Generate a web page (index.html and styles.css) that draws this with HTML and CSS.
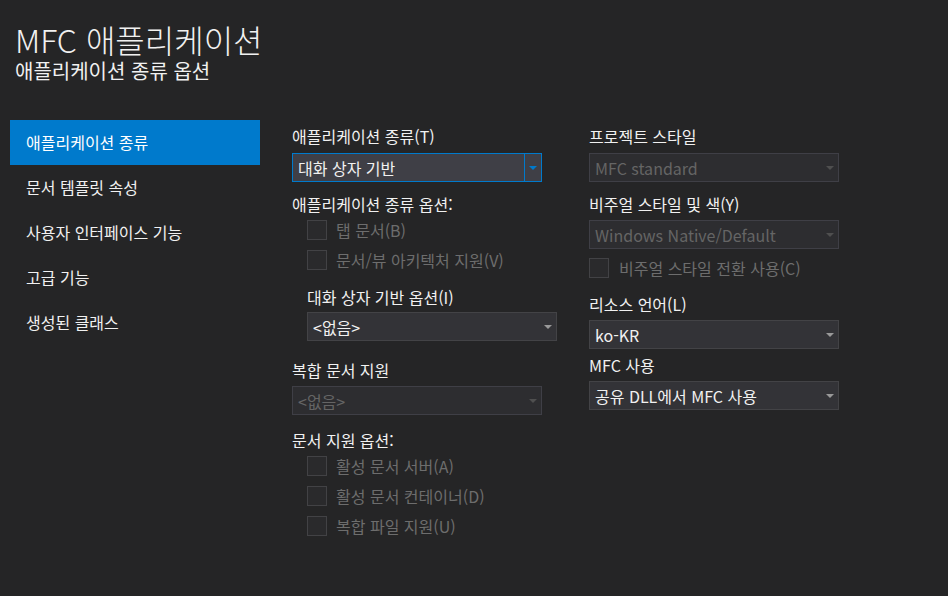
FILE: index.html
```html
<!DOCTYPE html>
<html lang="ko">
<head>
  <meta charset="UTF-8" />
  <meta name="viewport" content="width=device-width, initial-scale=1.0"/>
  <title>MFC 애플리케이션</title>
  <link rel="stylesheet" href="styles.css">
</head>
<body>

  <div class="header">
    <h1>MFC 애플리케이션</h1>
    <h2>애플리케이션 종류 옵션</h2>
  </div>

  <div class="main">
    <ul class="nav">
      <li class="active">애플리케이션 종류</li>
      <li>문서 템플릿 속성</li>
      <li>사용자 인터페이스 기능</li>
      <li>고급 기능</li>
      <li>생성된 클래스</li>
    </ul>

    <div class="col">
      <div class="label">애플리케이션 종류(T)</div>
      <div class="combo focus mt7">
        <span class="value">대화 상자 기반</span>
        <span class="btn"><span class="arrow"></span></span>
      </div>

      <div class="label mt12">애플리케이션 종류 옵션:</div>
      <div class="checks mt1">
        <div class="check"><span class="box"></span>탭 문서(B)</div>
        <div class="check"><span class="box"></span>문서/뷰 아키텍처 지원(V)</div>
      </div>

      <div class="indent">
        <div class="label mt12">대화 상자 기반 옵션(I)</div>
        <div class="combo mt5">
          <span class="value">&lt;없음&gt;</span>
          <span class="btn"><span class="arrow"></span></span>
        </div>
      </div>

      <div class="label mt19">복합 문서 지원</div>
      <div class="combo disabled mt6">
        <span class="value">&lt;없음&gt;</span>
        <span class="btn"><span class="arrow"></span></span>
      </div>

      <div class="label mt15">문서 지원 옵션:</div>
      <div class="checks mt1">
        <div class="check"><span class="box"></span>활성 문서 서버(A)</div>
        <div class="check"><span class="box"></span>활성 문서 컨테이너(D)</div>
        <div class="check"><span class="box"></span>복합 파일 지원(U)</div>
      </div>
    </div>

    <div class="col right">
      <div class="label">프로젝트 스타일</div>
      <div class="combo disabled mt7">
        <span class="value">MFC standard</span>
        <span class="btn"><span class="arrow"></span></span>
      </div>

      <div class="label mt12">비주얼 스타일 및 색(Y)</div>
      <div class="combo disabled mt6">
        <span class="value">Windows Native/Default</span>
        <span class="btn"><span class="arrow"></span></span>
      </div>
      <div class="check wide mt4"><span class="box"></span>비주얼 스타일 전환 사용(C)</div>

      <div class="label mt11">리소스 언어(L)</div>
      <div class="combo mt6">
        <span class="value">ko-KR</span>
        <span class="btn"><span class="arrow"></span></span>
      </div>

      <div class="label mt6">MFC 사용</div>
      <div class="combo mt6">
        <span class="value">공유 DLL에서 MFC 사용</span>
        <span class="btn"><span class="arrow"></span></span>
      </div>
    </div>
  </div>

</body>
</html>
```

FILE: styles.css
```css
body {
  margin: 0;
  background: #252526;
  color: #f1f1f1;
  font-family: "Noto Sans CJK KR", sans-serif;
  font-size: 16px;
}

.header {
  padding: 20px 0 0 15px;
}

h1 {
  margin: 0;
  font-size: 32px;
  font-weight: 300;
  line-height: 38px;
}

h2 {
  margin: 1px 0 0;
  font-size: 20px;
  font-weight: 400;
  line-height: 24px;
}

.main {
  display: flex;
  margin-top: 37px;
}

.nav {
  list-style: none;
  margin: 0 0 0 10px;
  padding: 0;
  width: 250px;
}

.nav li {
  height: 45px;
  line-height: 45px;
  padding-left: 16px;
}

.nav li.active {
  background: #007acc;
  color: #fff;
}

.col {
  display: flex;
  flex-direction: column;
  width: 250px;
  margin-left: 32px;
  padding-top: 6px;
}

.col.right {
  margin-left: 47px;
}

.label {
  line-height: 20px;
  height: 20px;
  white-space: nowrap;
}

.indent {
  padding-left: 15px;
  display: flex;
  flex-direction: column;
}

.indent .combo {
  width: 250px;
}

.combo {
  display: flex;
  align-items: center;
  height: 29px;
  box-sizing: border-box;
  background: #333337;
  border: 1px solid #434346;
  color: #f1f1f1;
}

.combo .value {
  flex: 1;
  padding-left: 5px;
  white-space: nowrap;
  overflow: hidden;
}

.combo .btn {
  width: 16px;
  align-self: stretch;
  display: flex;
  align-items: center;
  justify-content: center;
}

.arrow {
  width: 0;
  height: 0;
  border-left: 4px solid transparent;
  border-right: 4px solid transparent;
  border-top: 4px solid #999999;
}

.combo.focus {
  background: #3f3f46;
  border-color: #007acc;
}

.combo.focus .btn {
  border-left: 1px solid #007acc;
}

.combo.focus .arrow {
  border-top-color: #007acc;
}

.combo.disabled {
  background: #2d2d30;
  border-color: #3f3f46;
  color: #656565;
}

.combo.disabled .arrow {
  border-top-color: #4f4f4f;
}

.checks {
  display: flex;
  flex-direction: column;
  padding-left: 15px;
}

.check {
  display: flex;
  align-items: center;
  height: 30px;
  gap: 9px;
  color: #6d6d6d;
  white-space: nowrap;
}

.check .box {
  width: 18px;
  height: 18px;
  background: #2a2a2c;
  border: 1px solid #424245;
}

.check.wide {
  gap: 10px;
}

.mt1 { margin-top: 1px; }
.mt4 { margin-top: 4px; }
.mt5 { margin-top: 5px; }
.mt6 { margin-top: 6px; }
.mt7 { margin-top: 7px; }
.mt11 { margin-top: 11px; }
.mt12 { margin-top: 12px; }
.mt15 { margin-top: 15px; }
.mt19 { margin-top: 19px; }
```
